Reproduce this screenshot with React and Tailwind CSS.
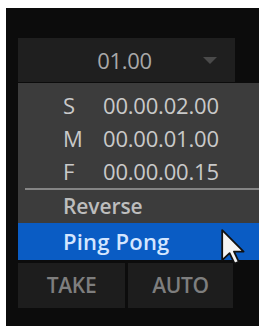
import React from 'react';

const font = { fontFamily: '"Open Sans", "Noto Sans", sans-serif' };

function TimeRow({ label, value }) {
  return (
    <div className="h-[33px] flex items-center pl-[45px] text-[22px] text-[#c9c9c9] tracking-[-0.2px]">
      <span className="w-[40px]">{label}</span>
      <span>{value}</span>
    </div>
  );
}

function Cursor() {
  return (
    <svg
      className="absolute left-[221px] top-[229px]"
      width="24"
      height="36"
      viewBox="0 0 12 18"
    >
      <path
        d="M0.6 0.6 L0.6 15.6 L4.3 12.1 L6.8 17.3 L8.9 16.4 L6.5 11.3 L11.3 11.3 Z"
        fill="#f4f4f4"
        stroke="#111"
        strokeWidth="0.9"
        strokeLinejoin="round"
      />
    </svg>
  );
}

export default function App() {
  return (
    <div className="relative w-[259px] h-[326px] bg-white overflow-hidden pl-[6px] pt-[8px]" style={font}>
      <div className="h-full bg-[#0c0c0c] pl-[12px] pt-[30px] flex flex-col">
        <div className="relative w-[217px] h-[44px] bg-[#1f1f1f] flex items-center justify-center">
          <span className="text-[22px] text-[#a8a8a8] tracking-[-0.3px] -ml-[4px]">01.00</span>
          <svg className="absolute right-[17px] top-[19px]" width="16" height="8" viewBox="0 0 16 8">
            <path d="M1 0 L15 0 L8 7 Z" fill="#4a4a4a" />
          </svg>
        </div>

        <div className="mt-[1px] w-[241px] bg-[#3c3c3c] pt-[6px] flex flex-col">
          <TimeRow label="S" value="00.00.02.00" />
          <TimeRow label="M" value="00.00.01.00" />
          <TimeRow label="F" value="00.00.00.15" />
          <div className="h-[2px] ml-[7px] bg-[#858585]"></div>
          <div className="h-[33px] flex items-center pl-[45px] text-[21px] font-semibold text-[#bdbdbd] tracking-[-0.1px]">
            Reverse
          </div>
          <div className="h-[37px] flex items-center pl-[45px] bg-[#0a5cc4] text-[22px] font-semibold text-[#d4e6ff] tracking-[0.2px]">
            Ping Pong
          </div>
        </div>

        <div className="mt-[3px] flex gap-[3px]">
          <div className="w-[107px] h-[45px] bg-[#1d1d1d] flex items-center justify-center text-[21px] font-semibold text-[#7e7e7e] tracking-[-0.3px]">
            TAKE
          </div>
          <div className="w-[105px] h-[45px] bg-[#1d1d1d] flex items-center justify-center text-[21px] font-semibold text-[#7e7e7e] tracking-[-0.3px]">
            AUTO
          </div>
        </div>
      </div>
      <Cursor />
    </div>
  );
}
